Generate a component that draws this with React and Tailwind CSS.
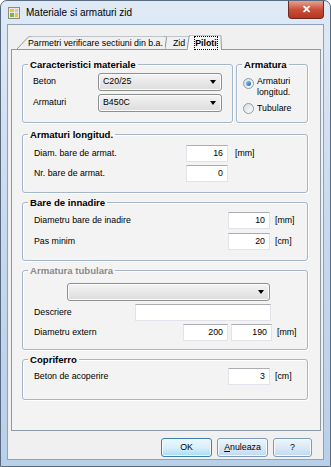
import { useState } from 'react'

const font = { fontFamily: '"Liberation Sans", Arial, sans-serif' }

function Legend({ children, disabled }) {
  return (
    <legend
      className={`ml-[5px] px-[2px] text-[9.6px] leading-[13px] font-bold ${disabled ? 'text-[#8a8a8a]' : 'text-black'}`}
    >
      {children}
    </legend>
  )
}

function Group({ title, disabled, className, children }) {
  return (
    <fieldset
      className={`shrink-0 border border-[#a3b6ca] rounded-[3px] shadow-[inset_1px_1px_0_#ffffff,1px_1px_0_#ffffff] ${className}`}
    >
      <Legend disabled={disabled}>{title}</Legend>
      {children}
    </fieldset>
  )
}

function Combo({ value, className }) {
  return (
    <div
      className={`h-[18px] flex items-center justify-between pl-[4px] pr-[5px] border border-[#8e8f8f] rounded-[3px] bg-gradient-to-b from-[#f4f4f4] to-[#dcdcdc] shadow-[inset_0_0_0_1px_#fbfbfb] ${className}`}
    >
      <span className="text-[8.8px]">{value}</span>
      <span className="w-0 h-0 border-l-[3.5px] border-r-[3.5px] border-t-[4px] border-l-transparent border-r-transparent border-t-black" />
    </div>
  )
}

function Field({ value, className }) {
  return (
    <div
      className={`h-[17px] flex items-center justify-end pr-[4px] bg-white border border-[#e2e3ea] border-t-[#abadb3] text-[8.8px] ${className}`}
    >
      {value}
    </div>
  )
}

function Radio({ checked }) {
  return (
    <span className="w-[11px] h-[11px] shrink-0 rounded-full border border-[#8c9aa8] bg-gradient-to-br from-[#d9dde2] to-[#fbfbfb] flex items-center justify-center">
      {checked && (
        <span className="w-[5px] h-[5px] rounded-full bg-gradient-to-br from-[#8fd0f8] to-[#1e5fa8]" />
      )}
    </span>
  )
}

function Tab({ children, active, first }) {
  return (
    <div className={`relative flex items-end ${first ? 'pl-[11px] pr-[6px]' : 'pl-[8px] pr-[5px]'} ${active ? 'z-10 -mb-px h-[15px]' : 'h-[13px]'}`}>
      <svg className="absolute inset-0 w-full h-full" preserveAspectRatio="none" viewBox="0 0 100 16">
        <path
          d={`M0 16 L${first ? 7 : 6} 2 Q${first ? 8 : 7} 0 ${first ? 10 : 9} 0 L96 0 Q98 0 98.5 2 L100 16`}
          fill={active ? '#f7f7f7' : '#f0f0f0'}
          stroke="#8c9aa8"
          strokeWidth="1"
          vectorEffect="non-scaling-stroke"
        />
      </svg>
      <span className={`relative text-[8.8px] leading-[12px] ${active ? 'font-bold outline-1 outline-dotted outline-black mb-[1px]' : ''}`}>
        {children}
      </span>
    </div>
  )
}

export default function App() {
  const [armatura, setArmatura] = useState('long')

  return (
    <div style={font} className="w-[331px] h-[467px] bg-white text-black">
      <div className="w-full h-full flex flex-col rounded-t-[7px] border border-[#5a6b80] bg-gradient-to-b from-[#dfeaf6] via-[#c6d9ee] to-[#b9d0ea] overflow-hidden">
        {/* title bar */}
        <div className="h-[23px] shrink-0 flex items-center pl-[7px] relative">
          <svg width="12" height="12" viewBox="0 0 12 12" className="mr-[6px]">
            <rect x="0.5" y="0.5" width="11" height="11" fill="#e8e8e8" stroke="#8a8a8a" />
            <rect x="2" y="2" width="4" height="3" fill="#f1c232" />
            <rect x="2" y="6" width="4" height="4" fill="#7ab648" />
            <rect x="7" y="6" width="3" height="4" fill="#f1c232" />
            <rect x="7" y="2" width="3" height="3" fill="#c9c9c9" />
          </svg>
          <span className="text-[10px] text-black">Materiale si armaturi zid</span>
          <div className="absolute right-[6px] top-0 w-[36px] h-[18px] rounded-b-[4px] border border-[#6d2a22] border-t-0 bg-gradient-to-b from-[#e8a090] via-[#c8503a] to-[#b8341e] flex items-center justify-center">
            <span className="text-white text-[11px] font-bold leading-none">✕</span>
          </div>
        </div>

        {/* client area */}
        <div className="flex-1 min-h-0 mx-[6px] mb-[6px] border border-[#8da2b9] bg-[#f0f0f0] flex flex-col">
          <div className="pt-[10px] pl-[3px] pr-[2px] flex flex-col">
            <div className="flex items-end pl-[6px] shrink-0">
              <Tab first>Parmetri verificare sectiuni din b.a.</Tab>
              <div className="-ml-[4px]"><Tab>Zid</Tab></div>
              <div className="-ml-[3px]"><Tab active>Piloti</Tab></div>
            </div>
            <div className="shrink-0 h-[382px] border border-[#8c9aa8] bg-[#f3f3f3] pl-[10px] pr-[12px] pt-[8px] flex flex-col gap-[3px]">
              <div className="flex gap-[3px] shrink-0">
                <Group title="Caracteristici materiale" className="w-[211px] h-[65px]">
                  <div className="pl-[10px] pt-[2px] flex flex-col gap-[3px]">
                    <div className="flex items-center">
                      <span className="w-[65px] text-[8.8px]">Beton</span>
                      <Combo value="C20/25" className="w-[124px]" />
                    </div>
                    <div className="flex items-center">
                      <span className="w-[65px] text-[8.8px]">Armaturi</span>
                      <Combo value="B450C" className="w-[124px]" />
                    </div>
                  </div>
                </Group>
                <Group title="Armatura" className="w-[72px] h-[65px]">
                  <div className="pl-[6px] pt-[5px] flex flex-col gap-[4px] text-[8.8px]">
                    <label className="flex items-start gap-[3px] cursor-default" onClick={() => setArmatura('long')}>
                      <span className="mt-[2px]"><Radio checked={armatura === 'long'} /></span>
                      <span className="leading-[11px]">Armaturi<br />longitud.</span>
                    </label>
                    <label className="flex items-center gap-[3px] cursor-default" onClick={() => setArmatura('tub')}>
                      <Radio checked={armatura === 'tub'} />
                      <span>Tubulare</span>
                    </label>
                  </div>
                </Group>
              </div>

              <Group title="Armaturi longitud." className="h-[65px] mt-[2px]">
                <div className="pl-[11px] pt-[4px] flex flex-col gap-[3px] text-[8.8px]">
                  <div className="flex items-center">
                    <span className="w-[152px]">Diam. bare de armat.</span>
                    <Field value="16" className="w-[42px]" />
                    <span className="ml-[7px]">[mm]</span>
                  </div>
                  <div className="flex items-center">
                    <span className="w-[152px]">Nr. bare de armat.</span>
                    <Field value="0" className="w-[42px]" />
                  </div>
                </div>
              </Group>

              <Group title="Bare de innadire" className="h-[65px]">
                <div className="pl-[11px] pt-[3px] flex flex-col gap-[4px] text-[8.8px]">
                  <div className="flex items-center">
                    <span className="w-[194px]">Diametru bare de inadire</span>
                    <Field value="10" className="w-[42px]" />
                    <span className="ml-[5px]">[mm]</span>
                  </div>
                  <div className="flex items-center">
                    <span className="w-[194px]">Pas minim</span>
                    <Field value="20" className="w-[42px]" />
                    <span className="ml-[5px]">[cm]</span>
                  </div>
                </div>
              </Group>

              <Group title="Armatura tubulara" disabled className="h-[86px]">
                <div className="pl-[11px] pt-[6px] flex flex-col gap-[3px] text-[8.8px]">
                  <Combo value="" className="w-[203px] ml-[33px]" />
                  <div className="flex items-center">
                    <span className="w-[101px]">Descriere</span>
                    <Field value="" className="w-[136px] h-[16px]" />
                  </div>
                  <div className="flex items-center">
                    <span className="w-[149px]">Diametru extern</span>
                    <Field value="200" className="w-[45px]" />
                    <Field value="190" className="w-[41px] ml-[3px]" />
                    <span className="ml-[5px]">[mm]</span>
                  </div>
                </div>
              </Group>

              <Group title="Copriferro" className="h-[47px]">
                <div className="pl-[11px] pt-[2px] flex items-center text-[8.8px]">
                  <span className="w-[194px]">Beton de acoperire</span>
                  <Field value="3" className="w-[42px]" />
                  <span className="ml-[5px]">[cm]</span>
                </div>
              </Group>
            </div>

            <div className="shrink-0 flex justify-end gap-[5px] pr-[9px] pt-[7px] text-[8.8px]">
              <button className="w-[51px] h-[19px] rounded-[3px] border border-[#3c7fb1] bg-gradient-to-b from-[#eaf6fd] via-[#d9f0fc] to-[#a7d9f5] shadow-[inset_0_0_0_1px_#f4fbff]">OK</button>
              <button className="w-[51px] h-[19px] rounded-[3px] border border-[#7a9bbd] bg-gradient-to-b from-[#eef5fb] via-[#dbe9f6] to-[#c2d8ee] shadow-[inset_0_0_0_1px_#f6faff]"><u>A</u>nuleaza</button>
              <button className="w-[39px] h-[19px] rounded-[3px] border border-[#7a9bbd] bg-gradient-to-b from-[#eef5fb] via-[#dbe9f6] to-[#c2d8ee] shadow-[inset_0_0_0_1px_#f6faff]">?</button>
            </div>
          </div>
        </div>
      </div>
    </div>
  )
}
